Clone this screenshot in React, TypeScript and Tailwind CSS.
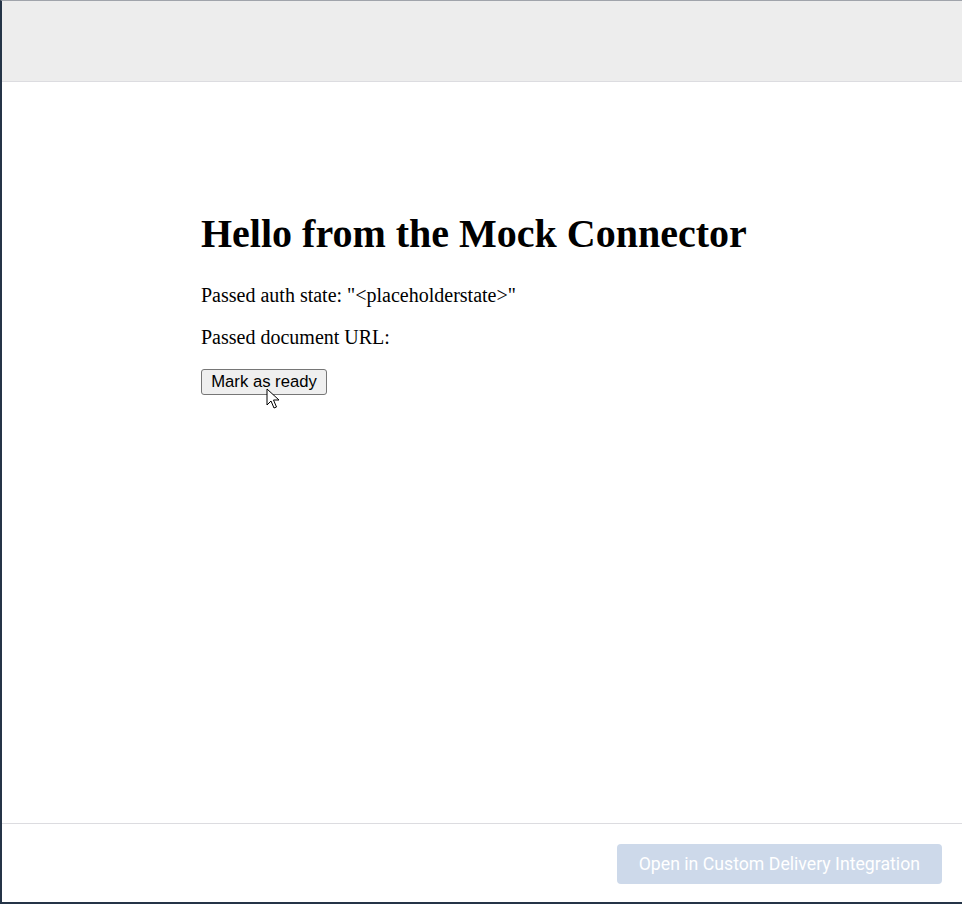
import React from "react";

export default function App() {
  return (
    <div className="relative w-[962px] h-[904px] flex flex-col bg-white border-l-2 border-b-2 border-t border-l-[#253447] border-b-[#253447] border-t-[#a0a4ab] overflow-hidden">
      <div className="h-[81px] shrink-0 bg-[#ededed] border-b border-[#dcdce0]" />
      <div className="flex-1 pl-[199px] pt-[129px] text-black" style={{ fontFamily: '"Liberation Serif", "Times New Roman", serif' }}>
        <h1 className="text-[40px] font-bold leading-[46px] m-0">Hello from the Mock Connector</h1>
        <p className="text-[20px] leading-[23px] mt-[27px]">Passed auth state: "&lt;placeholderstate&gt;"</p>
        <p className="text-[20px] leading-[23px] mt-[19px]">Passed document URL:</p>
        <button
          className="mt-[20px] w-[126px] h-[26px] bg-[#efefef] border border-[#767676] rounded-[3px] text-[16.67px] leading-[20px] text-black flex items-center justify-center"
          style={{ fontFamily: '"Liberation Sans", Arial, sans-serif' }}
        >
          Mark as ready
        </button>
      </div>
      <div className="h-[79px] shrink-0 border-t border-[#dcdce0] flex items-start justify-end pt-[20px] pr-[20px]">
        <button
          className="h-[40px] px-[22px] rounded-[4px] bg-[#cdd9ea] text-white text-[17.7px]"
          style={{ fontFamily: 'Roboto, "Liberation Sans", sans-serif' }}
        >
          Open in Custom Delivery Integration
        </button>
      </div>
      <svg className="absolute left-[264px] top-[387px]" width="14" height="22" viewBox="0 0 14 22">
        <path d="M1 1 L1 17 L5 13 L8 20 L10.5 19 L7.5 12 L13 12 Z" fill="white" stroke="black" strokeWidth="1" strokeLinejoin="miter" />
      </svg>
    </div>
  );
}
